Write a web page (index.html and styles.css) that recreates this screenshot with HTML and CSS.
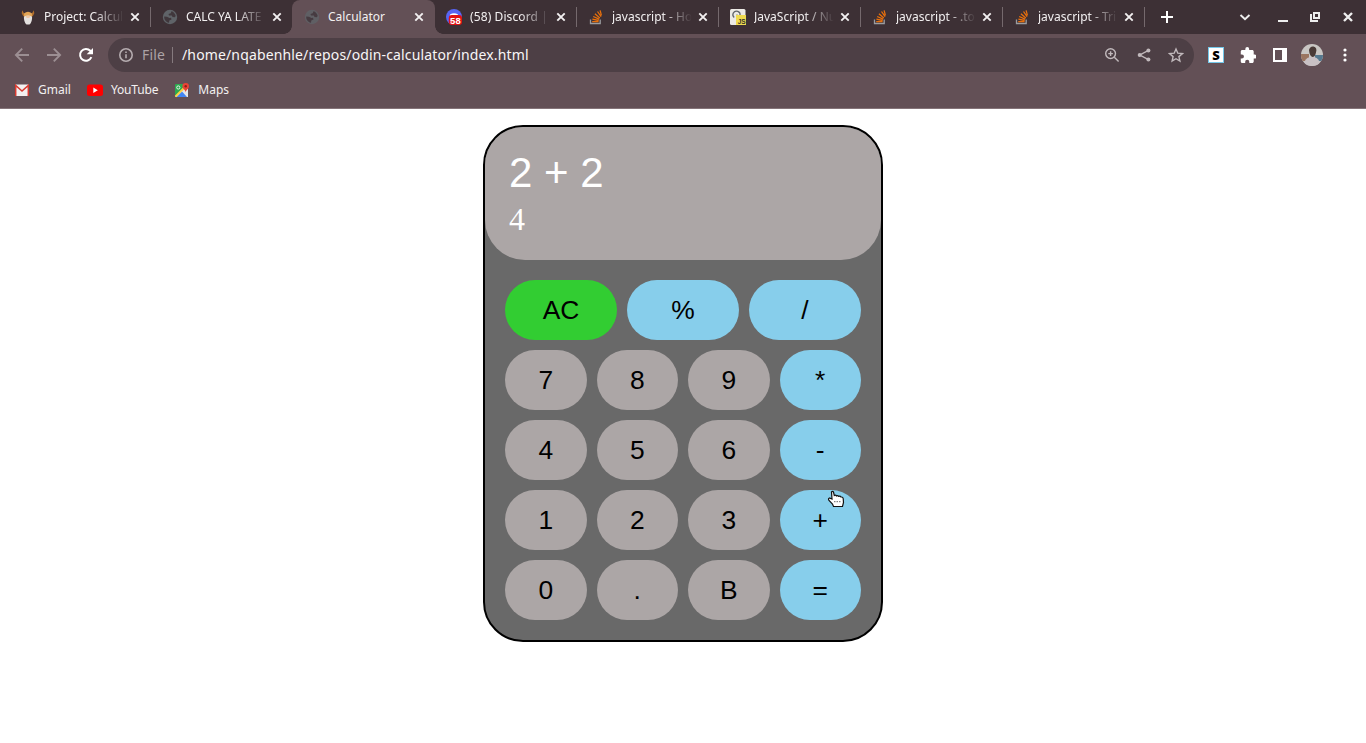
FILE: index.html
```html
<!DOCTYPE html>
<html lang="en">
<head>
<meta charset="utf-8">
<title>Calculator</title>
<link rel="stylesheet" href="styles.css">
</head>
<body>
<svg class="defs" width="0" height="0">
  <symbol id="close" viewBox="0 0 10 10"><path d="M1.3 1.3l7.4 7.4M8.700 1.300l-7.400 7.400" stroke="currentColor" stroke-width="1.900"/></symbol>
  <symbol id="globe" viewBox="0 0 16 16"><circle cx="8" cy="8" r="7.200" fill="currentColor"/><path class="land" d="M2.200 7.500L5 7.700 7.500 9 9 8.800 9.500 10.500 7.300 11.500 7 13.700C4 13.200 2 10.500 2.200 7.500ZM9.500 2.300L8.700 4.300 6.500 5 7 6.500 9.800 6.400 10.500 8 12.800 8.300 13.700 7C13.200 4.700 11.500 2.800 9.500 2.300Z"/></symbol>
  <symbol id="stack" viewBox="0 0 16 16"><path d="M2.500 10.500v4h9.700v-4" fill="none" stroke="#9b9da0" stroke-width="1.300"/><path d="M4.200 12.700h6.400M4.400 10.200l6.300 1.300M5.200 7.500l5.900 2.700M6.900 4.800l4.900 4.100M9.500 2.500l3.600 5.200M12.100 1.300l1.300 5" fill="none" stroke="#e8700d" stroke-width="1.300"/></symbol>
</svg>

<header class="browser">
  <div class="tabstrip">
    <div class="tab">
      <svg class="fav" viewBox="0 0 16 16"><path d="M2.200 1.200l2 3.500h7.600l2-3.500 .5 3-1.500 3H3.200l-1.500-3z" fill="#b3702d"/><path d="M4 4.500Q8 .8 12 4.500L11.700 10H4.300z" fill="#e2a456"/><path d="M3.900 7.700Q8 5.500 12.100 7.700 12.300 13 9.500 15.500H6.500Q3.700 13 3.900 7.700z" fill="#e4e1df"/><path d="M5.700 7h4.600l-1 2h-2.600z" fill="#efc6a5"/></svg>
      <span class="title">Project: Calcul</span><svg class="x"><use href="#close"/></svg>
    </div>
    <div class="tab nosep">
      <svg class="fav globe"><use href="#globe"/></svg>
      <span class="title">CALC YA LATE</span><svg class="x"><use href="#close"/></svg>
    </div>
    <div class="tab active">
      <svg class="fav globe"><use href="#globe"/></svg>
      <span class="title">Calculator</span><svg class="x"><use href="#close"/></svg>
    </div>
    <div class="tab">
      <svg class="fav" viewBox="0 0 16 16"><circle cx="8" cy="8" r="8" fill="#5865f2"/><path d="M4 5.500Q8 3 12 5.500V8H4z" fill="#fff"/><rect x="2.800" y="6" width="13.200" height="10" rx="3" fill="#e01313"/><text x="9.400" y="14.700" class="count">58</text></svg>
      <span class="title spaced">(58) Discord |</span><svg class="x"><use href="#close"/></svg>
    </div>
    <div class="tab">
      <svg class="fav"><use href="#stack"/></svg>
      <span class="title">javascript - Ho</span><svg class="x"><use href="#close"/></svg>
    </div>
    <div class="tab">
      <svg class="fav" viewBox="0 0 16 16"><rect width="15.500" height="16" rx="1.500" fill="#eceae6"/><path d="M4.200 8.500A3.600 3.600 0 1 1 10 6.500M7 5.500v3" fill="none" stroke="#62666b" stroke-width="1.200"/><rect x="6" y="6" width="10" height="10" fill="#f0db4f"/><text x="11.700" y="14.800" class="js">JS</text></svg>
      <span class="title">JavaScript / Nu</span><svg class="x"><use href="#close"/></svg>
    </div>
    <div class="tab">
      <svg class="fav"><use href="#stack"/></svg>
      <span class="title">javascript - .to</span><svg class="x"><use href="#close"/></svg>
    </div>
    <div class="tab">
      <svg class="fav"><use href="#stack"/></svg>
      <span class="title">javascript - Tri</span><svg class="x"><use href="#close"/></svg>
    </div>
    <svg class="plus" viewBox="0 0 12 12"><path d="M6 0v12M0 6h12" stroke="#fff" stroke-width="2"/></svg>
    <div class="window-buttons">
      <svg width="12" height="12" viewBox="0 0 12 12"><path d="M1.500 4l4.500 4.300L10.500 4" fill="none" stroke="#eee" stroke-width="1.900"/></svg>
      <svg width="10" height="12" viewBox="0 0 10 12"><path d="M0 10h10" stroke="#eee" stroke-width="2"/></svg>
      <svg width="10" height="10" viewBox="0 0 10 10" fill="none" stroke="#eee" stroke-width="2"><path d="M4 1h5v5H4zM1 2v7h7"/></svg>
      <svg width="10" height="10" viewBox="0 0 10 10"><path d="M1 1l8 8M9 1L1 9" stroke="#eee" stroke-width="2.400"/></svg>
    </div>
  </div>

  <div class="toolbar">
    <svg class="nav" viewBox="0 0 16 16"><path d="M15 8H2M8.200 1.700L1.900 8l6.300 6.300" /></svg>
    <svg class="nav" viewBox="0 0 16 16"><path d="M1 8h13M7.800 1.700L14.100 8l-6.300 6.300"/></svg>
    <svg class="nav reload" viewBox="0 0 16 16"><path d="M13.400 10.200A5.900 5.900 0 1 1 12.300 3.800L14 5.500"/><path class="head" d="M15 1v6.300H8.700z"/></svg>
    <div class="omnibox">
      <svg class="info" viewBox="0 0 16 16"><circle cx="8" cy="8" r="6.200"/><path d="M8 7.300v4M8 4.400v1.700"/></svg>
      <span class="scheme">File</span>
      <span class="url">/home/nqabenhle/repos/odin-calculator/index.html</span>
      <div class="actions">
        <svg viewBox="0 0 16 16"><circle cx="6.600" cy="6.600" r="4.900"/><path d="M10.300 10.300l4.300 4.300M6.600 4.300v4.600M4.300 6.600h4.600"/></svg>
        <svg viewBox="0 0 16 16"><path d="M12.500 3.300L3.800 8l8.700 4.700"/><g class="dots"><circle cx="12.400" cy="3.400" r="2"/><circle cx="3.700" cy="8" r="2"/><circle cx="12.400" cy="12.600" r="2"/></g></svg>
        <svg viewBox="0 0 16 16"><path d="M8 2l1.800 4.200 4.600.4-3.500 3 1 4.500L8 11.700l-3.900 2.400 1-4.500-3.500-3 4.600-.4z"/></svg>
      </div>
    </div>
    <div class="extensions">
      <div class="s-ext">S</div>
      <svg width="16" height="16" viewBox="1 1 21 21"><path fill="#fff" d="M20.500 11H19V7c0-1.100-.9-2-2-2h-4V3.500a2.500 2.500 0 0 0-5 0V5H4c-1.100 0-2 .9-2 2v3.800h1.500a2.700 2.700 0 0 1 0 5.400H2V20c0 1.100.9 2 2 2h3.800v-1.500a2.700 2.700 0 0 1 5.400 0V22H17c1.100 0 2-.9 2-2v-4h1.500a2.500 2.500 0 0 0 0-5z"/></svg>
      <svg width="14" height="14" viewBox="0 0 14 14"><path fill="#fff" fill-rule="evenodd" d="M0 0h14v14H0zM2 2v10h7V2z"/></svg>
      <svg width="22" height="22" viewBox="0 0 22 22"><clipPath id="round"><circle cx="11" cy="11" r="11"/></clipPath><g clip-path="url(#round)"><path fill="#c9c6c3" d="M0 0h22v22H0z"/><path fill="#9b7560" d="M0 10h8v7H0z"/><path fill="#56798f" d="M14 11h8v6h-8z"/><path fill="#c9c1c4" d="M3 22q0-8 6-9h4q6 1 6 9z"/><path fill="#493a36" d="M8 6q1-4 4.500-3.500 4 1 2.500 6-1 4.500-3.500 4.500-3-1-3.500-7z"/></g></svg>
      <svg width="4" height="14" viewBox="0 0 4 14" fill="#fff"><circle cx="2" cy="2" r="1.600"/><circle cx="2" cy="7" r="1.600"/><circle cx="2" cy="12" r="1.600"/></svg>
    </div>
  </div>

  <nav class="bookmarks">
    <a><svg viewBox="0 0 16 16"><rect x="1" y="2.500" width="14" height="11.500" rx="1" fill="#f2f0f0"/><path d="M1.700 14V3.500L8 9l6.300-5.500V14" fill="none" stroke="#d93a30" stroke-width="1.500"/></svg>Gmail</a>
    <a class="yt"><svg viewBox="0 0 16 16"><rect x="0" y="2.500" width="16" height="11.500" rx="2.500" fill="#f00"/><path d="M6.300 5.600v5.300L10.800 8.250z" fill="#fff"/></svg>YouTube</a>
    <a><svg viewBox="0 0 16 16"><rect x="1" y="2" width="13" height="13" rx="1" fill="#2da94f"/><path d="M1 15L14 2v13z" fill="#e4e6e8"/><path d="M2.500 15L8 9.500 13 15z" fill="#4285f4"/><path d="M1.500 14.500L11 5" stroke="#fbd144" stroke-width="2"/><circle cx="4.300" cy="5.500" r="1.600" fill="none" stroke="#e6f3e9"/><path d="M11.700 1a3.300 3.300 0 0 1 3.300 3.300c0 2.700-2.800 3-3.300 6-.5-3-3.300-3.300-3.300-6A3.300 3.300 0 0 1 11.700 1z" fill="#e94335"/><circle cx="11.700" cy="4.300" r="1.200" fill="#8c2018"/></svg>Maps</a>
  </nav>
</header>

<main>
  <section class="calculator">
    <div class="display">
      <div class="expression">2 + 2</div>
      <div class="result">4</div>
    </div>
    <div class="keys">
      <div class="row"><button class="clear">AC</button><button class="op">%</button><button class="op">/</button></div>
      <div class="row"><button>7</button><button>8</button><button>9</button><button class="op">*</button></div>
      <div class="row"><button>4</button><button>5</button><button>6</button><button class="op">-</button></div>
      <div class="row"><button>1</button><button>2</button><button>3</button><button class="op">+</button></div>
      <div class="row"><button>0</button><button>.</button><button>B</button><button class="op">=</button></div>
    </div>
  </section>
</main>
<svg class="pointer" viewBox="0 0 18 18"><path d="M4.500 2q1-1.200 2 0l.8 3.500q1.500-.8 2.200.5 1.300-.7 2.200.4 1.500-.6 2.300.6 2-.2 2.200 1.500l.3 4-1 4H6.500l-1-2.500-3.500-3.500Q.8 8.500 2.500 8l2.500 1z" fill="#fff" stroke="#111" stroke-width="1.200"/><path d="M7 11.700h7.500" stroke="#666" stroke-width="1" stroke-dasharray="1.500 1"/></svg>
</body>
</html>
```

FILE: styles.css
```css
* { box-sizing: border-box; }
body { margin: 0; height: 743px; overflow: hidden; background: #fff; }
svg { display: block; flex: none; }
.defs { position: absolute; }

.browser { height: 109px; background: #635056; border-bottom: 1px solid #857479; font-family: "Noto Sans", sans-serif; color: #f3f0f1; }
.tabstrip { display: flex; height: 34px; padding-left: 8px; background: #3d3035; }
.tab { display: flex; align-items: center; width: 142px; height: 34px; padding: 0 10px 0 12px; position: relative; }
.tab::after { content: ""; position: absolute; right: -1px; top: 7px; width: 1px; height: 20px; background: #75696d; }
.tab.nosep::after { display: none; }
.fav { width: 16px; height: 16px; margin-right: 8px; }
.globe { color: #5f6368; }
.land { fill: #40373c; }
.active .fav { opacity: .8; }
.title { width: 80px; white-space: nowrap; font-size: 12px; line-height: 16px; -webkit-mask-image: linear-gradient(90deg, #000 50px, transparent 80px); mask-image: linear-gradient(90deg, #000 50px, transparent 80px); }
.title.spaced { letter-spacing: .1px; }
.active .title { -webkit-mask-image: none; mask-image: none; }
.x { width: 10px; height: 10px; margin-left: 6px; color: #f3f0f1; }
.tab.active { background: #635056; border-radius: 8px 8px 0 0; width: 143px; margin-right: -1px; z-index: 1; }
.tab.active::before, .tab.active::after { content: ""; display: block; position: absolute; top: auto; bottom: 0; width: 8px; height: 8px; }
.tab.active::before { left: -8px; background: radial-gradient(circle at 0 0, transparent 7.5px, #635056 8px); }
.tab.active::after { right: -8px; background: radial-gradient(circle at 100% 0, transparent 7.5px, #635056 8px); }
.count { font: bold 9.500px "Liberation Sans", sans-serif; fill: #fff; text-anchor: middle; }
.js { font: bold 6.500px "Liberation Sans", sans-serif; fill: #343029; text-anchor: middle; }
.plus { width: 12px; height: 12px; margin: 11px 0 0 17px; }
.window-buttons { display: flex; align-items: center; gap: 22px; margin-left: auto; padding-right: 13px; }
.window-buttons svg:first-child { margin-right: 5px; }
.window-buttons svg:nth-child(-n+3) { transform: translateX(-1px); }

.toolbar { display: flex; align-items: center; height: 42px; padding: 0 19px 0 14px; }
.nav { width: 16px; height: 16px; margin-right: 16px; fill: none; stroke: #9c8f93; stroke-width: 1.900; }
.reload { margin-right: 14px; stroke: #fff; stroke-width: 2; }
.reload .head { fill: #fff; stroke: none; }
.omnibox { display: flex; align-items: center; flex: none; width: 1086px; height: 34px; padding: 0 10px; border-radius: 17px; background: #4d3f45; font-size: 14px; line-height: 20px; color: #f8f6f7; }
.info { width: 16px; height: 16px; fill: none; stroke: #b5acaf; stroke-width: 1.600; }
.scheme { display: flex; align-items: center; width: 31px; height: 16px; margin: 0 9px 0 8px; letter-spacing: .2px; color: #aca3a6; border-right: 1px solid #857a7e; }
.url { letter-spacing: .14px; }
.actions { display: flex; gap: 16px; margin-left: auto; }
.actions svg { width: 16px; height: 16px; fill: none; stroke: #c1b9bc; stroke-width: 1.400; }
.actions .dots { fill: #c1b9bc; stroke: none; }
.extensions { display: flex; align-items: center; flex: none; margin-left: 14px; }
.s-ext { width: 16px; height: 16px; margin-right: 16px; background: #fff; border: 1px solid #73c8ea; color: #000; font: 900 13px/14px "Noto Sans", sans-serif; text-align: center; }
.extensions svg:nth-child(2) { margin-right: 17px; }
.extensions svg:nth-child(3) { margin-right: 14px; }
.extensions svg:nth-child(4) { margin-right: 20px; }

.bookmarks { display: flex; height: 27px; padding-left: 14px; font-size: 12px; }
.bookmarks a { display: flex; align-items: center; gap: 8px; margin-right: 16px; }
.bookmarks .yt { letter-spacing: -.15px; }
.bookmarks svg { width: 16px; height: 16px; }

main { display: flex; justify-content: center; padding-top: 16px; }
.calculator { width: 400px; height: 517px; background: #696969; border: 2px solid #000; border-radius: 40px; }
.display { height: 133px; padding: 22px 24px 0; background: #aca6a6; border-radius: 38px 38px 40px 40px; color: #fff; }
.expression { font: 42px/48px "Liberation Sans", Arial, sans-serif; }
.result { font: 32px/44px "Liberation Serif", serif; }
.keys { display: flex; flex-direction: column; gap: 10px; padding: 20px; }
.row { display: flex; gap: 10px; }
.row button { flex: 1 1 0; min-width: 0; height: 60px; padding: 0; border: 0; border-radius: 30px; background: #aca6a6; color: #000; font: 26.400px "Liberation Sans", Arial, sans-serif; }
.row .op { background: #87ceeb; }
.row .clear { background: #32cd32; }
.pointer { position: absolute; left: 827px; top: 490px; width: 18px; height: 18px; }
```
